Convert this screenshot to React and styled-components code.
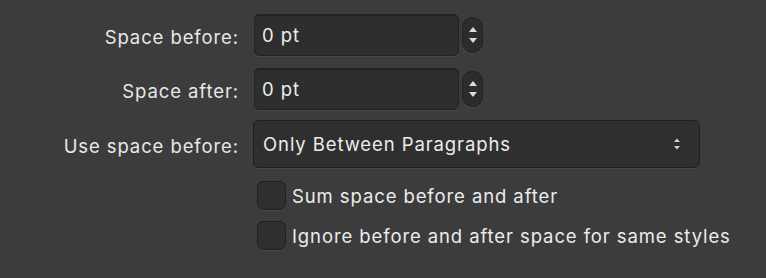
import styled, { createGlobalStyle } from 'styled-components';

const GlobalStyle = createGlobalStyle`
  html, body {
    margin: 0;
    padding: 0;
    background: #3c3c3c;
  }
  body {
    font-family: Inter, "Open Sans", sans-serif;
    color: #e6e6e6;
  }
`;

function Stepper() {
  return (
    <StepperBox>
      <svg width="10" height="26" viewBox="0 0 10 26">
        <path d="M1 10 L5 5 L9 10 Z" fill="#dcdcdc" />
        <path d="M1 16 L5 21 L9 16 Z" fill="#dcdcdc" />
      </svg>
    </StepperBox>
  );
}

function SelectArrows() {
  return (
    <svg width="8" height="16" viewBox="0 0 8 16">
      <path d="M1 6 L4 2.5 L7 6 Z" fill="#d0d0d0" />
      <path d="M1 10 L4 13.5 L7 10 Z" fill="#d0d0d0" />
    </svg>
  );
}

function App() {
  return (
    <Page>
      <GlobalStyle />
      <Form>
        <Label $offset={3}>Space before:</Label>
        <SpinRow>
          <TextField defaultValue="0 pt" />
          <Stepper />
        </SpinRow>

        <Label $offset={3}>Space after:</Label>
        <SpinRow>
          <TextField defaultValue="0 pt" />
          <Stepper />
        </SpinRow>

        <Label $offset={1}>Use space before:</Label>
        <Select>
          <span>Only Between Paragraphs</span>
          <SelectArrows />
        </Select>

        <span />
        <CheckList>
          <CheckRow>
            <CheckBox />
            <CheckText>Sum space before and after</CheckText>
          </CheckRow>
          <CheckRow>
            <CheckBox />
            <CheckText>Ignore before and after space for same styles</CheckText>
          </CheckRow>
        </CheckList>
      </Form>
    </Page>
  );
}

export default App;

const textStyle = `
  font-family: Inter, "Open Sans", sans-serif;
  font-size: 18.5px;
  letter-spacing: 0.9px;
`;

const Page = styled.div`
  width: 766px;
  height: 278px;
  background: #3c3c3c;
  overflow: hidden;
`;

const Form = styled.div`
  display: grid;
  grid-template-columns: 240px 1fr;
  column-gap: 14px;
  row-gap: 12px;
  padding-top: 14px;
  align-items: center;
`;

const Label = styled.div`
  ${textStyle}
  text-align: right;
  color: #e8e8e8;
  padding-top: ${props => props.$offset}px;
  padding-right: 1px;
`;

const SpinRow = styled.div`
  display: flex;
  align-items: center;
  gap: 3px;
`;

const TextField = styled.input`
  ${textStyle}
  box-sizing: border-box;
  width: 205px;
  height: 42px;
  background: #2e2e2e;
  border: 1px solid #232323;
  border-radius: 5px;
  box-shadow: 0 1px 0 #4a4a4a, inset 0 1px 1px rgba(0, 0, 0, 0.25);
  color: #ececec;
  padding: 0 0 0 7px;
  outline: none;
`;

const StepperBox = styled.div`
  box-sizing: border-box;
  width: 21px;
  height: 36px;
  border-radius: 10px;
  background: #2c2c2c;
  border: 1px solid #222;
  box-shadow: 0 1px 0 #4a4a4a;
  display: flex;
  align-items: center;
  justify-content: center;
`;

const Select = styled.div`
  ${textStyle}
  box-sizing: border-box;
  width: 447px;
  height: 48px;
  margin: -2px 0 0 -1px;
  background: #2f2f2f;
  border: 1px solid #1f1f1f;
  border-radius: 5px;
  box-shadow: 0 1px 0 #4a4a4a;
  display: flex;
  align-items: center;
  justify-content: space-between;
  padding: 0 18px 0 9px;
  color: #ececec;
`;

const CheckList = styled.div`
  display: flex;
  flex-direction: column;
  gap: 11px;
  margin-top: 1px;
`;

const CheckRow = styled.div`
  display: flex;
  align-items: center;
  gap: 6px;
`;

const CheckBox = styled.div`
  box-sizing: border-box;
  width: 29px;
  height: 29px;
  margin-left: 3px;
  border-radius: 6px;
  background: #2f2f2f;
  border: 1px solid #202020;
  box-shadow: 0 1px 0 #4a4a4a;
`;

const CheckText = styled.span`
  ${textStyle}
  color: #ececec;
`;
